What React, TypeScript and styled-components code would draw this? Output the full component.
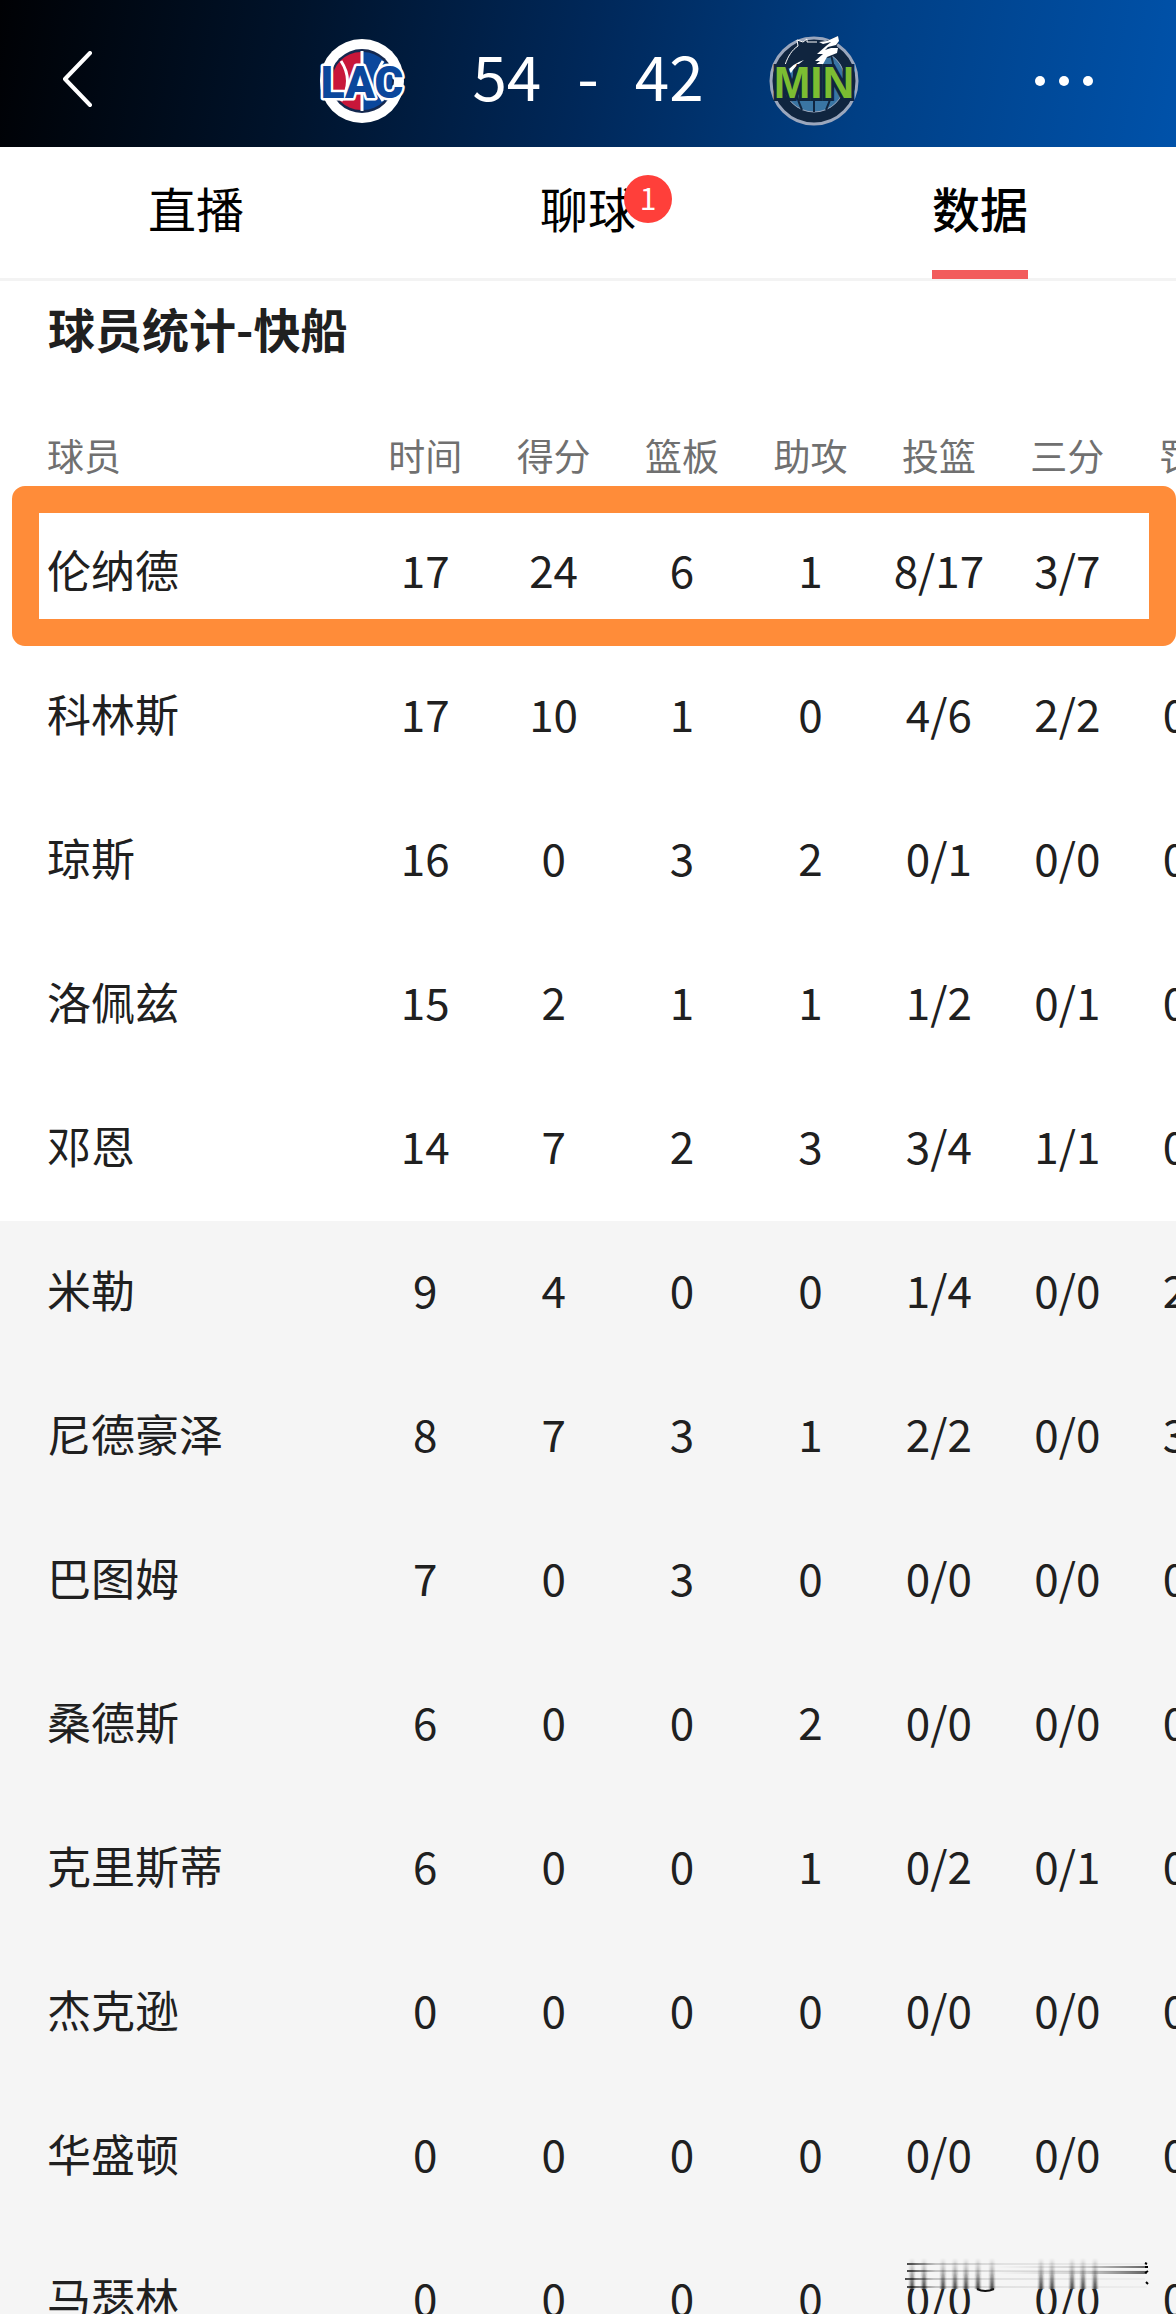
import React from "react";
import styled, { createGlobalStyle } from "styled-components";

const GlobalStyle = createGlobalStyle`
  *, *::before, *::after { box-sizing: border-box; }
  body {
    margin: 0;
    background: #ffffff;
    color: #202020;
    font-family: "Noto Sans CJK SC", "Noto Sans", sans-serif;
  }
  button { font: inherit; color: inherit; background: none; border: 0; padding: 0; }
`;

const Shell = styled.div`
  position: relative;
  display: flex;
  flex-direction: column;
  height: 100vh;
  padding-bottom: 2px;
  overflow: hidden;
`;

const ScoreBar = styled.header`
  flex: none;
  display: grid;
  grid-template-columns: 1fr auto 1fr;
  align-items: center;
  height: 147px;
  padding: 14px 60px 0;
  color: #ffffff;
  background: linear-gradient(100deg, #000104 0%, #00132b 25%, #00285a 50%, #003f85 73%, #0052aa 100%);
`;

const IconButton = styled.button<{ $end?: boolean }>`
  display: flex;
  justify-self: ${(p) => (p.$end ? "end" : "start")};
  padding: ${(p) => (p.$end ? "10px 18px" : "10px 0")};
`;

const Match = styled.div`
  display: flex;
  align-items: center;
  gap: 64px;
`;

const Score = styled.div`
  display: flex;
  gap: 36px;
  padding-bottom: 14px;
  font-size: 62px;
  line-height: 80px;
  font-weight: 400;
`;

const Tabs = styled.nav`
  flex: none;
  display: grid;
  grid-template-columns: repeat(3, 1fr);
  justify-items: center;
  height: 134px;
  border-bottom: 3px solid #f3f3f3;
`;

const Tab = styled.button<{ $active?: boolean }>`
  position: relative;
  height: 132px;
  padding-bottom: 4px;
  font-size: 48px;
  line-height: 64px;
  font-weight: ${(p) => (p.$active ? 500 : 400)};
  color: #000000;
  border-bottom: 9px solid ${(p) => (p.$active ? "#f25b5c" : "transparent")};
`;

const Badge = styled.span`
  position: absolute;
  top: 28px;
  right: -36px;
  width: 48px;
  height: 48px;
  border-radius: 50%;
  background: #ff3f3a;
  color: #ffffff;
  font-size: 30px;
  line-height: 44px;
  font-weight: 400;
  text-align: center;
`;

const Content = styled.main`
  flex: 1;
  min-height: 0;
  overflow: auto;
  scrollbar-width: none;
`;

const Title = styled.h1`
  margin: 0;
  padding: 0 48px 4px;
  font-size: 47px;
  line-height: 94px;
  font-weight: 700;
`;

const StatsArea = styled.div`
  position: relative;
  overflow: hidden;
`;

const Stats = styled.table`
  width: calc(100% + 84px);
  table-layout: fixed;
  border-collapse: collapse;
  text-align: center;
`;

const HeadCell = styled.th<{ $name?: boolean }>`
  width: ${(p) => (p.$name ? "361px" : "auto")};
  height: 122px;
  padding: ${(p) => (p.$name ? "30px 0 0 47px" : "30px 0 0")};
  text-align: ${(p) => (p.$name ? "left" : "center")};
  font-size: 37px;
  line-height: 48px;
  font-weight: 400;
  color: #707070;
`;

const Group = styled.tbody<{ $bench?: boolean }>`
  background: ${(p) => (p.$bench ? "#f5f5f5" : "#ffffff")};
`;

const NameCell = styled.th`
  height: 144px;
  padding: 0 0 8px 47px;
  text-align: left;
  font-size: 44px;
  line-height: 60px;
  font-weight: 400;
`;

const Cell = styled.td`
  height: 144px;
  padding: 0 0 8px;
  font-size: 44px;
  line-height: 60px;
`;

const Highlight = styled.div`
  position: absolute;
  top: 107px;
  left: 12px;
  right: 0;
  height: 160px;
  border: 27px solid #ff8c39;
  border-radius: 13px;
  pointer-events: none;
`;

const Smudge = styled.svg`
  position: absolute;
  right: 21px;
  bottom: 22px;
  pointer-events: none;
`;

type Player = { name: string; stats: string[] };

const columns = ["时间", "得分", "篮板", "助攻", "投篮", "三分", "罚球"];

const player = (name: string, line: string): Player => ({ name, stats: line.split(" ") });

const starters: Player[] = [
  player("伦纳德", "17 24 6 1 8/17 3/7 5/5"),
  player("科林斯", "17 10 1 0 4/6 2/2 0/0"),
  player("琼斯", "16 0 3 2 0/1 0/0 0/0"),
  player("洛佩兹", "15 2 1 1 1/2 0/1 0/0"),
  player("邓恩", "14 7 2 3 3/4 1/1 0/0"),
];

const bench: Player[] = [
  player("米勒", "9 4 0 0 1/4 0/0 2/2"),
  player("尼德豪泽", "8 7 3 1 2/2 0/0 3/4"),
  player("巴图姆", "7 0 3 0 0/0 0/0 0/0"),
  player("桑德斯", "6 0 0 2 0/0 0/0 0/0"),
  player("克里斯蒂", "6 0 0 1 0/2 0/1 0/0"),
  player("杰克逊", "0 0 0 0 0/0 0/0 0/0"),
  player("华盛顿", "0 0 0 0 0/0 0/0 0/0"),
  player("马瑟林", "0 0 0 0 0/0 0/0 0/0"),
];

const PlayerRows = ({ players }: { players: Player[] }) => (
  <>
    {players.map((p) => (
      <tr key={p.name}>
        <NameCell scope="row">{p.name}</NameCell>
        {p.stats.map((value, i) => (
          <Cell key={columns[i]}>{value}</Cell>
        ))}
      </tr>
    ))}
  </>
);

const ClippersLogo = () => (
  <svg width="92" height="92" viewBox="-46 -46 92 92" role="img" aria-label="LAC">
    <circle r="42" fill="#ffffff" />
    <circle r="32" fill="#14284f" />
    <path d="M-1 -29A29 29 0 0 0 -1 29Z" fill="#c8173a" />
    <path d="M1 -29A29 29 0 0 1 1 29Z" fill="#0b479c" />
    <path d="M0 -30V30M-21 -20Q-8 0 -21 20M21 -20Q8 0 21 20" fill="none" stroke="#ffffff" strokeWidth="3" />
    <text
      y="17"
      textAnchor="middle"
      fontFamily="Roboto, sans-serif"
      fontWeight="900"
      fontSize="44"
      fill="#0b479c"
      stroke="#ffffff"
      strokeWidth="5"
      strokeLinejoin="round"
      paintOrder="stroke"
    >
      LAC
    </text>
  </svg>
);

const WolvesLogo = () => (
  <svg width="92" height="92" viewBox="-46 -46 92 92" role="img" aria-label="MIN">
    <circle r="43" fill="#10253f" stroke="#9ba7bd" strokeWidth="3" />
    <circle r="31" fill="#3a75a3" stroke="#9ba7bd" strokeWidth="1" />
    <path d="M0 -31V31M-17 -26Q-25 0 -12 29M17 -26Q25 0 12 29" fill="none" stroke="#10253f" strokeWidth="2" />
    <path
      d="M-29 -13C-26 -24 -22 -31 -16 -36L-17 -41L-11 -39L-7 -42L-6 -38L4 -40L12 -40L24 -45L25 -40L22 -34L24 -29L15 -23L10 -24C6 -20 5 -17 4 -13Z"
      fill="#10253f"
    />
    <path
      d="M-29 -16C-26 -25 -22 -31 -16 -35L-17 -41L-11 -39L-7 -42L-7 -39L3 -39"
      fill="none"
      stroke="#ffffff"
      strokeWidth="1"
    />
    <path
      d="M5 -39L13 -40L24 -45L25 -40L22 -36L14 -34L11 -31L17 -33L24 -33L23 -28L13 -24L8 -15L-4 -12L6 -20L1 -20L9 -27L3 -27L12 -35L17 -39L9 -37Z"
      fill="#ffffff"
    />
    <path d="M-26 -10Q-22 -17 -10 -21Q-21 -13 -23 -8Z" fill="#ffffff" />
    <text
      y="17"
      textAnchor="middle"
      fontFamily="'Liberation Sans', Arial, sans-serif"
      fontWeight="700"
      fontSize="44"
      fill="#7cbd32"
      stroke="#10253f"
      strokeWidth="6"
      paintOrder="stroke"
    >
      MIN
    </text>
  </svg>
);

const verticalStreaks = [7, 19, 38, 50, 61, 73, 87, 136, 147, 167, 178, 190];

const SmudgeMark = () => (
  <Smudge width="250" height="38" viewBox="0 0 250 38" aria-hidden="true">
    <defs>
      <linearGradient id="down" x1="0" y1="0" x2="0" y2="1">
        <stop offset="0" stopColor="#202020" stopOpacity="0" />
        <stop offset="0.5" stopColor="#202020" stopOpacity="0.35" />
        <stop offset="1" stopColor="#202020" stopOpacity="0.85" />
      </linearGradient>
      <linearGradient id="fade" x1="0" y1="0" x2="1" y2="0">
        <stop offset="0" stopColor="#000000" stopOpacity="0.7" />
        <stop offset="0.12" stopColor="#000000" stopOpacity="0.2" />
        <stop offset="0.4" stopColor="#000000" stopOpacity="0.08" />
        <stop offset="1" stopColor="#000000" stopOpacity="0.03" />
      </linearGradient>
      <linearGradient id="rise" x1="0" y1="0" x2="1" y2="0">
        <stop offset="0" stopColor="#000000" stopOpacity="0" />
        <stop offset="0.6" stopColor="#000000" stopOpacity="0.15" />
        <stop offset="1" stopColor="#000000" stopOpacity="0.6" />
      </linearGradient>
      <filter id="soft" x="-100%" width="300%" y="0" height="100%">
        <feGaussianBlur stdDeviation="1 0" />
      </filter>
    </defs>
    <rect width="250" height="33" fill="#f5f5f5" />
    {verticalStreaks.map((x) => (
      <rect key={x} x={x - 2} y="2" width="4" height="31" fill="url(#down)" filter="url(#soft)" />
    ))}
    {[7, 14, 22, 30].map((y) => (
      <rect key={y} x={y === 22 ? 0 : 2} y={y} width="240" height="2" fill="url(#fade)" />
    ))}
    <rect x="90" y="10" width="152" height="2" fill="url(#rise)" />
    <rect x="90" y="15" width="152" height="3" fill="url(#rise)" />
    <path d="M72 33Q80 37 89 33" fill="none" stroke="#111111" strokeWidth="2" />
    <path d="M240 7L242 8M240 11L243 11M240 17L243 15M241 26L243 28" stroke="#000000" strokeWidth="2" />
  </Smudge>
);

export default function App() {
  return (
    <Shell>
      <GlobalStyle />
      <ScoreBar>
        <IconButton type="button" aria-label="返回">
          <svg width="34" height="60" viewBox="0 0 34 60" fill="none" stroke="#ffffff" strokeWidth="4" strokeLinecap="round" strokeLinejoin="round">
            <path d="M30 2L5 28L30 54" />
          </svg>
        </IconButton>
        <Match>
          <ClippersLogo />
          <Score>
            <span>54</span>
            <span>-</span>
            <span>42</span>
          </Score>
          <WolvesLogo />
        </Match>
        <IconButton type="button" aria-label="更多" $end>
          <svg width="64" height="12" viewBox="0 0 64 12" fill="#ffffff">
            <circle cx="6" cy="6" r="5" />
            <circle cx="30" cy="6" r="5" />
            <circle cx="54" cy="6" r="5" />
          </svg>
        </IconButton>
      </ScoreBar>
      <Tabs>
        <Tab type="button">直播</Tab>
        <Tab type="button">
          聊球<Badge>1</Badge>
        </Tab>
        <Tab type="button" $active aria-current="page">
          数据
        </Tab>
      </Tabs>
      <Content>
        <Title>球员统计-快船</Title>
        <StatsArea>
          <Stats>
            <thead>
              <tr>
                <HeadCell scope="col" $name>
                  球员
                </HeadCell>
                {columns.map((c) => (
                  <HeadCell key={c} scope="col">
                    {c}
                  </HeadCell>
                ))}
              </tr>
            </thead>
            <Group>
              <PlayerRows players={starters} />
            </Group>
            <Group $bench>
              <PlayerRows players={bench} />
            </Group>
          </Stats>
          <Highlight />
        </StatsArea>
      </Content>
      <SmudgeMark />
    </Shell>
  );
}
